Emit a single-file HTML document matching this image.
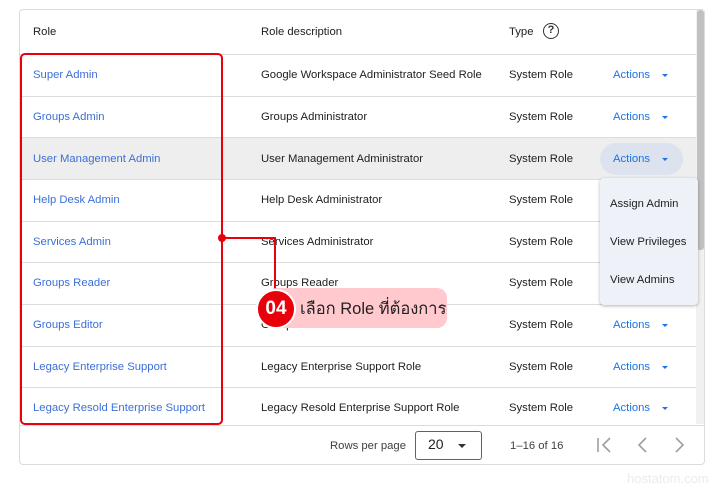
<!DOCTYPE html>
<html><head><meta charset="utf-8"><style>
*{margin:0;padding:0;box-sizing:border-box}
body{width:720px;height:489px;background:#fff;font-family:"Liberation Sans",Arial,sans-serif;position:relative;overflow:hidden;font-size:11.3px;color:#202124}
.abs{position:absolute}
.box{left:19px;top:9px;width:686px;height:456px;border:1px solid #dadce0;border-radius:4px}
.line{position:absolute;left:20px;width:676px;height:1px;background:#dadce0}
.t{position:absolute;white-space:nowrap;line-height:14px}
.role{color:#3c6fd6}
.act{color:#1a73e8}
.car{display:inline-block;width:0;height:0;border-left:3px solid transparent;border-right:3px solid transparent;border-top:3px solid #1a73e8;margin-left:12px;vertical-align:middle}
</style></head><body>
<div class="abs box"></div>
<div class="abs" style="left:696px;top:10px;width:8px;height:414px;background:#f1f1f1"></div>
<div class="abs" style="left:697px;top:10px;width:7px;height:240px;background:#c1c1c1;border-radius:3px"></div>
<div class="abs" style="left:20px;top:138px;width:676px;height:41px;background:#eeeeee"></div>
<div class="line" style="top:54px"></div>
<div class="line" style="top:96px"></div>
<div class="line" style="top:137px"></div>
<div class="line" style="top:179px"></div>
<div class="line" style="top:221px"></div>
<div class="line" style="top:262px"></div>
<div class="line" style="top:304px"></div>
<div class="line" style="top:346px"></div>
<div class="line" style="top:387px"></div>
<div class="abs" style="left:20px;top:425px;width:684px;height:1px;background:#dadce0"></div>

<div class="t" style="left:33px;top:25px">Role</div>
<div class="t" style="left:261px;top:25px">Role description</div>
<div class="t" style="left:509px;top:25px">Type</div>
<div class="abs" style="left:543px;top:23px;width:16px;height:16px;border:1.8px solid #333;border-radius:50%;font-size:11px;font-weight:bold;text-align:center;line-height:13px;color:#333">?</div>

<div class="t role" style="left:33px;top:68px">Super Admin</div>
<div class="t" style="left:261px;top:68px">Google Workspace Administrator Seed Role</div>
<div class="t" style="left:509px;top:68px">System Role</div>
<div class="t act" style="left:613px;top:68px">Actions<span class="car"></span></div>

<div class="t role" style="left:33px;top:110px">Groups Admin</div>
<div class="t" style="left:261px;top:110px">Groups Administrator</div>
<div class="t" style="left:509px;top:110px">System Role</div>
<div class="t act" style="left:613px;top:110px">Actions<span class="car"></span></div>

<div class="abs" style="left:600px;top:143px;width:83px;height:32px;background:#dde3ee;border-radius:16px"></div>
<div class="t role" style="left:33px;top:152px">User Management Admin</div>
<div class="t" style="left:261px;top:152px">User Management Administrator</div>
<div class="t" style="left:509px;top:152px">System Role</div>
<div class="t act" style="left:613px;top:152px">Actions<span class="car"></span></div>

<div class="t role" style="left:33px;top:193px">Help Desk Admin</div>
<div class="t" style="left:261px;top:193px">Help Desk Administrator</div>
<div class="t" style="left:509px;top:193px">System Role</div>

<div class="t role" style="left:33px;top:235px">Services Admin</div>
<div class="t" style="left:261px;top:235px">Services Administrator</div>
<div class="t" style="left:509px;top:235px">System Role</div>

<div class="t role" style="left:33px;top:276px">Groups Reader</div>
<div class="t" style="left:261px;top:276px">Groups Reader</div>
<div class="t" style="left:509px;top:276px">System Role</div>

<div class="t role" style="left:33px;top:318px">Groups Editor</div>
<div class="t" style="left:261px;top:318px">Groups Editor</div>
<div class="t" style="left:509px;top:318px">System Role</div>
<div class="t act" style="left:613px;top:318px">Actions<span class="car"></span></div>

<div class="t role" style="left:33px;top:360px">Legacy Enterprise Support</div>
<div class="t" style="left:261px;top:360px">Legacy Enterprise Support Role</div>
<div class="t" style="left:509px;top:360px">System Role</div>
<div class="t act" style="left:613px;top:360px">Actions<span class="car"></span></div>

<div class="t role" style="left:33px;top:401px">Legacy Resold Enterprise Support</div>
<div class="t" style="left:261px;top:401px">Legacy Resold Enterprise Support Role</div>
<div class="t" style="left:509px;top:401px">System Role</div>
<div class="t act" style="left:613px;top:401px">Actions<span class="car"></span></div>

<div class="abs" style="left:600px;top:178px;width:98px;height:127px;background:#eef1f7;border-radius:4px;box-shadow:0 1px 3px rgba(0,0,0,.3)"></div>
<div class="t" style="left:610px;top:197px">Assign Admin</div>
<div class="t" style="left:610px;top:235px">View Privileges</div>
<div class="t" style="left:610px;top:273px">View Admins</div>

<div class="t" style="left:330px;top:439px;color:#3c4043">Rows per page</div>
<div class="abs" style="left:415px;top:431px;width:67px;height:29px;border:1px solid #5f6368;border-radius:3px"></div>
<div class="t" style="left:428px;top:437px;font-size:14px">20</div>
<div class="abs" style="left:458px;top:444px;border-left:4px solid transparent;border-right:4px solid transparent;border-top:4px solid #333"></div>
<div class="t" style="left:510px;top:439px;color:#3c4043">1–16 of 16</div>
<svg class="abs" style="left:594px;top:435px" width="100" height="20" viewBox="0 0 100 20" fill="none" stroke="#9aa0a6" stroke-width="1.6">
<path d="M4 3v14M16 3l-7 7 7 7"/><path d="M52 3l-7 7 7 7"/><path d="M82 3l7 7-7 7"/></svg>

<div class="abs" style="left:20px;top:53px;width:203px;height:372px;border:2px solid #e8000b;border-radius:5px"></div>
<div class="abs" style="left:221px;top:237px;width:55px;height:2px;background:#e8000b"></div>
<div class="abs" style="left:274px;top:237px;width:2px;height:55px;background:#e8000b"></div>
<div class="abs" style="left:218px;top:234px;width:8px;height:8px;background:#e8000b;border-radius:50%"></div>
<div class="abs" style="left:267px;top:288px;width:180px;height:40px;background:#ffc9ce;border-radius:10px"></div>
<div class="abs" style="left:256px;top:289px;width:40px;height:40px;background:#e8000b;border:2px solid #fff;border-radius:50%;color:#fff;font-weight:bold;font-size:19px;text-align:center;line-height:36px">04</div>
<div class="t" style="left:300px;top:299px;font-size:16.5px;line-height:20px;font-family:'Liberation Sans','Noto Sans CJK SC',sans-serif;color:#222">เลือก Role ที่ต้องการ</div>

<div class="t" style="left:627px;top:472px;color:#ececec;font-size:13px">hostatom.com</div>
</body></html>
